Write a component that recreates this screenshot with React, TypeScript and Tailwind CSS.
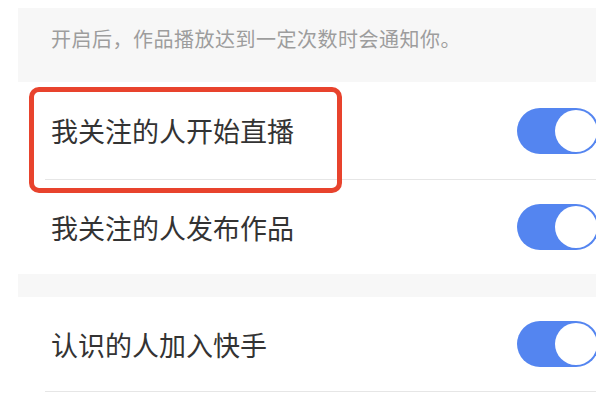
const ROWS_TOP = ["我关注的人开始直播", "我关注的人发布作品"];

function Toggle() {
  return (
    <div className="ml-auto mr-[-3px] flex h-[46px] w-[82px] shrink-0 items-center justify-end rounded-full bg-[#5485f0] pr-[2px]">
      <div className="h-[42px] w-[42px] rounded-full bg-white" />
    </div>
  );
}

function Row({ label, divider, height }: { label: string; divider?: boolean; height: string }) {
  return (
    <div className={`${height} flex flex-col bg-white`}>
      <div className="flex flex-1 items-center pl-[33px]">
        <span className="text-[27px] leading-none text-[#333333]">{label}</span>
        <Toggle />
      </div>
      {divider && <div className="ml-[27px] h-px bg-[#e6e6e6]" />}
    </div>
  );
}

export default function App() {
  return (
    <div className="relative h-[414px] w-[596px] overflow-hidden bg-white pl-[18px] pt-[8px] font-['Noto_Sans_CJK_SC',sans-serif]">
      <div className="h-[74px] bg-[#f7f7f7] pl-[33px] pt-[16px]">
        <p className="text-[20px] leading-[30px] tracking-[0.5px] text-[#9d9d9d]">
          开启后，作品播放达到一定次数时会通知你。
        </p>
      </div>

      <Row label={ROWS_TOP[0]} divider height="h-[98px]" />
      <Row label={ROWS_TOP[1]} height="h-[94px]" />

      <div className="h-[23px] bg-[#f7f7f7]" />

      <Row label="认识的人加入快手" divider height="h-[95px]" />

      {/* annotation box */}
      <div className="absolute left-[29px] top-[87px] h-[106px] w-[313px] rounded-[10px] border-[5px] border-[#e8432d]" />
    </div>
  );
}
